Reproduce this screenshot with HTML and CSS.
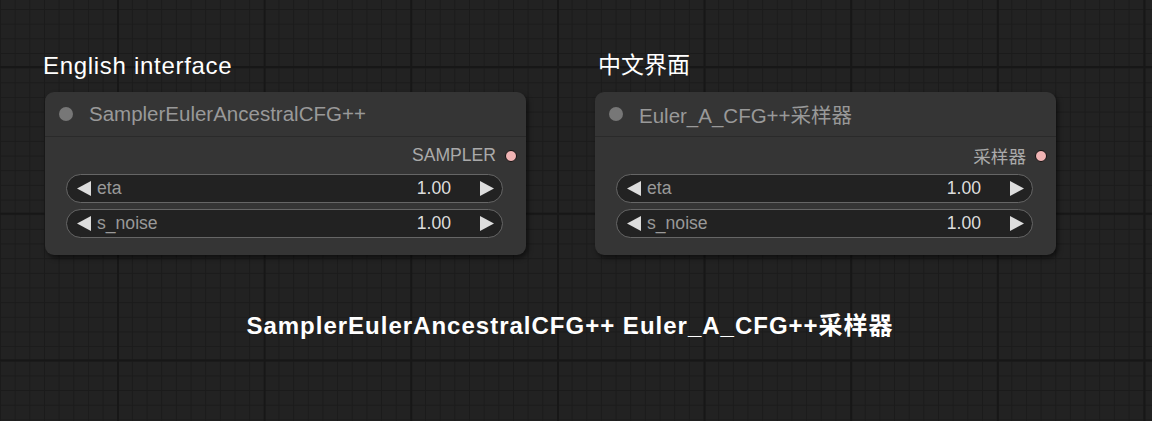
FILE: index.html
```html
<!DOCTYPE html>
<html>
<head>
	<meta charset="utf-8">
	<title>SamplerEulerAncestralCFG++</title>
	<link rel="stylesheet" href="styles.css">
</head>
<body>
	<div class="panels">
		<section class="panel panel-en">
			<h2 class="panel-title">English interface</h2>
			<div class="node">
				<div class="node-header">
					<span class="node-dot"></span>
					<span class="node-title">SamplerEulerAncestralCFG++</span>
				</div>
				<div class="node-body">
					<div class="output-row">
						<span class="output-label">SAMPLER</span>
						<span class="output-dot"></span>
					</div>
					<div class="widget">
						<svg class="arrow" width="15" height="15" viewBox="0 0 15 15"><polygon points="14,0 14,15 0,7.5"/></svg>
						<span class="widget-label">eta</span>
						<span class="widget-value">1.00</span>
						<svg class="arrow" width="15" height="15" viewBox="0 0 15 15"><polygon points="1,0 1,15 15,7.5"/></svg>
					</div>
					<div class="widget">
						<svg class="arrow" width="15" height="15" viewBox="0 0 15 15"><polygon points="14,0 14,15 0,7.5"/></svg>
						<span class="widget-label">s_noise</span>
						<span class="widget-value">1.00</span>
						<svg class="arrow" width="15" height="15" viewBox="0 0 15 15"><polygon points="1,0 1,15 15,7.5"/></svg>
					</div>
				</div>
			</div>
		</section>

		<section class="panel panel-zh">
			<h2 class="panel-title">中文界面</h2>
			<div class="node">
				<div class="node-header">
					<span class="node-dot"></span>
					<span class="node-title">Euler_A_CFG++采样器</span>
				</div>
				<div class="node-body">
					<div class="output-row">
						<span class="output-label">采样器</span>
						<span class="output-dot"></span>
					</div>
					<div class="widget">
						<svg class="arrow" width="15" height="15" viewBox="0 0 15 15"><polygon points="14,0 14,15 0,7.5"/></svg>
						<span class="widget-label">eta</span>
						<span class="widget-value">1.00</span>
						<svg class="arrow" width="15" height="15" viewBox="0 0 15 15"><polygon points="1,0 1,15 15,7.5"/></svg>
					</div>
					<div class="widget">
						<svg class="arrow" width="15" height="15" viewBox="0 0 15 15"><polygon points="14,0 14,15 0,7.5"/></svg>
						<span class="widget-label">s_noise</span>
						<span class="widget-value">1.00</span>
						<svg class="arrow" width="15" height="15" viewBox="0 0 15 15"><polygon points="1,0 1,15 15,7.5"/></svg>
					</div>
				</div>
			</div>
		</section>
	</div>

	<p class="caption">SamplerEulerAncestralCFG++ Euler_A_CFG++采样器</p>
</body>
</html>
```

FILE: styles.css
```css
html, body {
    height: 100%;
}

body {
    margin: 0;
    font-family: "Liberation Sans", "Noto Sans CJK SC", sans-serif;
    color: #fff;
    background-color: #222;
    background-image:
        linear-gradient(to right, #171717 2px, transparent 2px),
        linear-gradient(to bottom, #171717 2px, transparent 2px),
        linear-gradient(to right, #1b1b1b 1px, transparent 1px),
        linear-gradient(to bottom, #1b1b1b 1px, transparent 1px);
    background-size: 146.67px 146.67px, 146.67px 146.67px, 14.667px 14.667px, 14.667px 14.667px;
    background-position: 117px 66px, 117px 66px, 0 9px, 0 9px;
    overflow: hidden;
}

.panels {
    display: flex;
    padding: 50px 0 0 43px;
}

.panel-en {
    width: 552px;
}

.panel-title {
    margin: 0 0 11px 0;
    font-size: 24px;
    letter-spacing: 0.7px;
    font-weight: normal;
    line-height: 31px;
    color: #fff;
}

.panel-zh .panel-title {
    margin-left: 3px;
    font-size: 23px;
    letter-spacing: 0;
}

.node {
    background: #353535;
    border-radius: 9px;
    box-shadow: 2px 3px 5px rgba(0, 0, 0, 0.55);
}

.panel-en .node {
    width: 481px;
    margin-left: 2px;
}

.panel-zh .node {
    width: 461px;
}

.node-header {
    display: flex;
    align-items: center;
    height: 44px;
    padding-left: 14px;
    border-bottom: 1px solid #2a2a2a;
}

.node-dot {
    width: 14px;
    height: 14px;
    border-radius: 50%;
    background: #777;
    margin-right: 16px;
}

.node-title {
    font-size: 20.5px;
    color: #999;
}

.node-body {
    padding: 0 23px 17px 21px;
}

.output-row {
    display: flex;
    justify-content: flex-end;
    align-items: center;
    height: 37px;
    margin-right: -14px;
}

.output-label {
    font-size: 17.6px;
    color: #aaa;
    margin-right: 9px;
}

.output-dot {
    width: 10px;
    height: 10px;
    border-radius: 50%;
    background: #f0b4b4;
    border: 1px solid #111;
}

.widget {
    display: flex;
    align-items: center;
    height: 27px;
    margin-bottom: 6px;
    padding: 0 8px 0 10px;
    background: #222;
    border: 1px solid #666;
    border-radius: 15px;
    font-size: 17.6px;
}

.widget:last-child {
    margin-bottom: 0;
}

.arrow {
    fill: #ddd;
    flex: none;
}

.widget-label {
    flex: 1;
    margin-left: 5px;
    color: #999;
}

.widget-value {
    color: #ddd;
    margin-right: 28px;
}

.caption {
    margin: 51px 0 0 0;
    text-align: center;
    font-size: 24px;
    letter-spacing: 1px;
    font-weight: bold;
    padding-right: 12px;
}
```
